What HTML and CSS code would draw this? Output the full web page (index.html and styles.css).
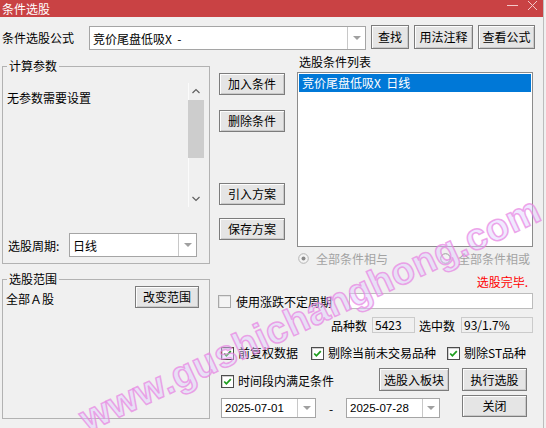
FILE: index.html
```html
<!DOCTYPE html>
<html lang="zh-CN">
<head>
<meta charset="utf-8">
<title>条件选股</title>
<link rel="stylesheet" href="styles.css">
</head>
<body>
<div class="win">
  <div class="titlebar">
    <span class="title">条件选股</span>
    <svg class="tb-icons" width="40" height="17" viewBox="0 0 40 17">
      <line x1="3" y1="5.5" x2="14" y2="5.5" stroke="#f3c9c9" stroke-width="1"/>
      <line x1="24" y1="1" x2="33" y2="10" stroke="#f3c9c9" stroke-width="1"/>
      <line x1="33" y1="1" x2="24" y2="10" stroke="#f3c9c9" stroke-width="1"/>
    </svg>
  </div>

  <div class="formula-row">
    <span class="formula-label">条件选股公式</span>
    <div class="combo formula-combo"><span class="combo-text">竞价尾盘低吸X  -</span><span class="combo-arrow"><i></i></span></div>
    <button class="btn btn-find">查找</button>
    <button class="btn btn-usage">用法注释</button>
    <button class="btn btn-view">查看公式</button>
  </div>

  <div class="main">
    <div class="left-col">
      <fieldset class="group g-params">
        <legend>计算参数</legend>
        <div class="params-body">
          <div class="params-text">无参数需要设置</div>
          <div class="vscroll">
            <svg class="sarrow" width="16" height="16" viewBox="0 0 16 16"><polyline points="4.5,10 8,6.5 11.5,10" fill="none" stroke="#606060" stroke-width="1.2"/></svg>
            <div class="strack"><div class="sthumb"></div></div>
            <svg class="sarrow" width="16" height="16" viewBox="0 0 16 16"><polyline points="4.5,6 8,9.5 11.5,6" fill="none" stroke="#606060" stroke-width="1.2"/></svg>
          </div>
        </div>
        <div class="period-row">
          <span class="period-label">选股周期:</span>
          <div class="combo period-combo"><span class="combo-text">日线</span><span class="combo-arrow"><i></i></span></div>
        </div>
      </fieldset>

      <fieldset class="group g-range">
        <legend>选股范围</legend>
        <div class="range-body">
          <span class="range-text">全部Ａ股</span>
          <button class="btn btn-range">改变范围</button>
        </div>
      </fieldset>
    </div>

    <div class="right-area">
      <div class="top-row">
        <div class="btn-col">
          <button class="btn btn-side b1">加入条件</button>
          <button class="btn btn-side b2">删除条件</button>
          <button class="btn btn-side b3">引入方案</button>
          <button class="btn btn-side b4">保存方案</button>
        </div>
        <div class="list-col">
          <div class="list-label">选股条件列表</div>
          <div class="listbox">
            <div class="list-item selected">竞价尾盘低吸X  日线</div>
          </div>
          <div class="radio-row">
            <span class="radio-item r1">
              <svg width="11" height="11" viewBox="0 0 11 11"><circle cx="5.5" cy="5.5" r="4.8" fill="#f4f4f4" stroke="#b4b4b4"/><circle cx="5.5" cy="5.5" r="2" fill="#8a8a8a"/></svg>
              <span>全部条件相与</span>
            </span>
            <span class="radio-item r2">
              <svg width="11" height="11" viewBox="0 0 11 11"><circle cx="5.5" cy="5.5" r="4.8" fill="#f4f4f4" stroke="#9a9a9a"/></svg>
              <span>全部条件相或</span>
            </span>
          </div>
        </div>
      </div>

      <div class="bottom">
        <div class="status">选股完毕.</div>
        <div class="row-unfix">
          <span class="cb unchecked"></span>
          <span class="cb-text">使用涨跌不定周期</span>
          <div class="edit unfix-edit"></div>
        </div>
        <div class="row-counts">
          <span>品种数</span>
          <div class="field f-count">5423</div>
          <span class="sel-label">选中数</span>
          <div class="field f-sel">93/1.7%</div>
        </div>
        <div class="row-opts">
          <span class="opt o1"><span class="cb checked"><svg width="13" height="13" viewBox="0 0 13 13"><polyline points="3.2,6.5 5.4,8.8 9.8,4.2" fill="none" stroke="#1e9e1e" stroke-width="1.8"/></svg></span>前复权数据</span>
          <span class="opt o2"><span class="cb checked"><svg width="13" height="13" viewBox="0 0 13 13"><polyline points="3.2,6.5 5.4,8.8 9.8,4.2" fill="none" stroke="#1e9e1e" stroke-width="1.8"/></svg></span>剔除当前未交易品种</span>
          <span class="opt o3"><span class="cb checked"><svg width="13" height="13" viewBox="0 0 13 13"><polyline points="3.2,6.5 5.4,8.8 9.8,4.2" fill="none" stroke="#1e9e1e" stroke-width="1.8"/></svg></span>剔除ST品种</span>
        </div>
        <div class="row-time">
          <span class="opt o-time"><span class="cb checked"><svg width="13" height="13" viewBox="0 0 13 13"><polyline points="3.2,6.5 5.4,8.8 9.8,4.2" fill="none" stroke="#1e9e1e" stroke-width="1.8"/></svg></span>时间段内满足条件</span>
          <button class="btn btn-block">选股入板块</button>
          <button class="btn btn-run">执行选股</button>
        </div>
        <div class="row-date">
          <div class="combo date-combo d1"><span class="combo-text date-text">2025-07-01</span><span class="combo-arrow"><i></i></span></div>
          <span class="dash">-</span>
          <div class="combo date-combo d2"><span class="combo-text date-text">2025-07-28</span><span class="combo-arrow"><i></i></span></div>
          <button class="btn btn-close">关闭</button>
        </div>
      </div>
    </div>
  </div>

  <div class="watermark">www.gushichanghong.com</div>
</div>
</body>
</html>
```

FILE: styles.css
```css
* { box-sizing: border-box; }
html, body { margin: 0; padding: 0; }
body {
  width: 546px;
  height: 428px;
  background: #f0f0f0;
  font-family: "Noto Sans CJK SC", "Liberation Sans", sans-serif;
  font-size: 12px;
  color: #000;
  overflow: hidden;
}
.win {
  position: relative;
  width: 544px;
  height: 428px;
  border-right: 1px solid #bdbdbd;
  overflow: hidden;
}

/* title bar */
.titlebar {
  height: 17px;
  background: #c94244;
  display: flex;
  align-items: center;
  justify-content: space-between;
}
.title {
  color: #fff;
  padding-left: 2px;
  line-height: 17px;
  font-size: 12px;
}
.tb-icons { margin-right: -1px; }

/* generic controls */
.btn {
  font-family: inherit;
  font-size: 12px;
  color: #000;
  background: #e5e5e5;
  border: 1px solid #7c7c7c;
  box-shadow: inset 1px 1px 0 #fdfdfd, inset -1px -1px 0 #c9c9c9;
  padding: 0;
  margin: 0;
  line-height: 1;
  display: flex;
  align-items: center;
  justify-content: center;
  flex: none;
}
.combo {
  display: flex;
  background: #fff;
  border: 1px solid #a5a5a5;
  flex: none;
}
.combo-text {
  flex: 1;
  white-space: pre;
  padding-left: 3px;
  display: flex;
  align-items: center;
  overflow: hidden;
}
.combo-arrow {
  width: 18px;
  border-left: 1px solid #c8c8c8;
  display: flex;
  align-items: center;
  justify-content: center;
}
.combo-arrow i {
  display: block;
  width: 0;
  height: 0;
  border-left: 4px solid transparent;
  border-right: 4px solid transparent;
  border-top: 4px solid #a0a0a0;
}

/* formula row */
.formula-row {
  display: flex;
  align-items: flex-start;
  height: 25px;
  margin-top: 8px;
  padding-left: 2px;
}
.formula-label {
  width: 87px;
  line-height: 25px;
}
.formula-combo {
  width: 277px;
  height: 24px;
  margin-top: 1px;
}
.btn-find { width: 38px; height: 24px; margin-left: 5px; }
.btn-usage { width: 59px; height: 24px; margin-left: 5px; }
.btn-view { width: 57px; height: 24px; margin-left: 5px; }

/* main area */
.main {
  display: flex;
  align-items: flex-start;
  padding-left: 2px;
}
.left-col {
  width: 208px;
  display: flex;
  flex-direction: column;
}
.group {
  margin: 0;
  padding: 0;
  border: 1px solid #b2b2b2;
  min-width: 0;
  width: 208px;
}
.group legend {
  padding: 0 2px;
  margin-left: 4px;
  line-height: 14px;
  font-size: 12px;
}
.g-params {
  margin-top: 9px;
  height: 205px;
}
.params-body {
  display: flex;
  height: 134px;
}
.params-text {
  flex: 1;
  margin-top: 17px;
  padding-left: 4px;
  line-height: 16px;
}
.vscroll {
  width: 16px;
  height: 124px;
  margin-top: 10px;
  margin-right: 5px;
  display: flex;
  flex-direction: column;
  border-left: 1px solid #fbfbfb;
}
.sarrow { flex: none; margin-left: -1px; }
.strack {
  flex: 1;
  padding-top: 1px;
}
.sthumb {
  height: 58px;
  background: #cdcdcd;
  margin-left: -1px;
}
.period-row {
  display: flex;
  align-items: center;
  margin-top: 26px;
  height: 24px;
  padding-left: 5px;
}
.period-label { width: 61px; }
.period-combo { width: 128px; height: 24px; }

.g-range {
  margin-top: 8px;
  height: 147px;
}
.range-body {
  display: flex;
  justify-content: space-between;
  align-items: flex-start;
  padding-left: 3px;
  padding-right: 10px;
}
.range-text {
  margin-top: 5px;
  line-height: 16px;
}
.btn-range { width: 64px; height: 22px; }

/* right area */
.right-area {
  margin-left: 8px;
  width: 316px;
}
.top-row {
  display: flex;
  align-items: flex-start;
}
.btn-col {
  margin-left: 1px;
  width: 66px;
  display: flex;
  flex-direction: column;
}
.btn-side { width: 66px; height: 22px; }
.b1 { margin-top: 23px; }
.b2 { margin-top: 15px; }
.b3 { margin-top: 51px; }
.b4 { margin-top: 13px; }

.list-col {
  margin-left: 12px;
  width: 236px;
}
.list-label {
  margin-top: 5px;
  line-height: 14px;
  padding-left: 2px;
}
.listbox {
  margin-top: 3px;
  height: 175px;
  background: #fff;
  border: 1px solid #8c8c8c;
  padding: 1px;
}
.list-item {
  height: 18px;
  line-height: 18px;
  padding-left: 3px;
  white-space: pre;
}
.list-item.selected {
  background: #0078d7;
  color: #fff;
}
.radio-row {
  margin-top: 4px;
  height: 14px;
  display: flex;
  align-items: center;
  color: #a3a3a3;
}
.radio-item {
  display: flex;
  align-items: center;
  gap: 7px;
}
.r1 { margin-left: 1px; width: 142px; }

/* bottom */
.status {
  margin-top: 10px;
  line-height: 14px;
  text-align: right;
  padding-right: 6px;
  color: #ff0000;
}
.cb {
  width: 13px;
  height: 13px;
  flex: none;
  display: block;
  background: #fff;
  border: 1px solid #4c4c4c;
  box-shadow: inset 1px 1px 0 #cfcfcf;
  position: relative;
}
.cb svg { display: block; margin: -1px 0 0 -1px; }
.cb.unchecked {
  background: #f4f4f4;
  border: 1px solid #a8a8a8;
  box-shadow: inset 1px 1px 0 #e2e2e2;
}
.row-unfix {
  margin-top: 4px;
  height: 16px;
  display: flex;
  align-items: center;
}
.cb-text { margin-left: 5px; }
.edit {
  background: #fff;
  border: 1px solid #bcbcbc;
}
.unfix-edit {
  margin-left: auto;
  margin-right: 1px;
  width: 184px;
  height: 16px;
}
.row-counts {
  margin-top: 8px;
  height: 16px;
  display: flex;
  align-items: center;
  justify-content: flex-end;
  padding-right: 1px;
}
.field {
  height: 16px;
  background: #f0f0f0;
  border: 1px solid #cbcbcb;
  line-height: 14px;
  padding-left: 2px;
}
.f-count { width: 43px; margin-left: 5px; }
.sel-label { margin-left: 4px; }
.f-sel { width: 72px; margin-left: 6px; }

.row-opts {
  margin-top: 13px;
  height: 14px;
  display: flex;
  align-items: center;
  padding-left: 3px;
}
.opt {
  display: flex;
  align-items: center;
  gap: 4px;
  line-height: 14px;
  white-space: nowrap;
}
.o1 { width: 90px; }
.o2 { width: 136px; }

.row-time {
  margin-top: 8px;
  height: 23px;
  display: flex;
  align-items: flex-start;
  padding-left: 3px;
}
.o-time { margin-top: 6px; height: 14px; }
.btn-block { width: 70px; height: 23px; margin-left: auto; }
.btn-run { width: 65px; height: 23px; margin-left: 13px; margin-right: 7px; }

.row-date {
  margin-top: 4px;
  height: 22px;
  display: flex;
  align-items: flex-start;
  padding-left: 3px;
}
.date-combo { height: 20px; margin-top: 3px; }
.d1 { width: 95px; }
.d2 { width: 94px; }
.date-text {
  font-family: "Liberation Sans", sans-serif;
  font-size: 11.5px;
  padding-left: 3px;
}
.d2 .combo-arrow { width: 17px; }
.dash {
  width: 30px;
  text-align: center;
  padding-top: 7px;
  line-height: 14px;
}
.btn-close { width: 65px; height: 22px; margin-left: auto; margin-right: 7px; }

/* watermark overlay */
.watermark {
  position: absolute;
  left: 58px;
  top: 290px;
  width: 504px;
  height: 48px;
  line-height: 48px;
  text-align: center;
  transform: rotate(-25deg);
  transform-origin: 252px 24px;
  font-family: "Liberation Sans", sans-serif;
  font-size: 38px;
  font-weight: bold;
  letter-spacing: 0.5px;
  color: rgba(222, 205, 255, 0.45);
  -webkit-text-stroke: 1.5px rgba(232, 130, 225, 0.7);
  pointer-events: none;
  white-space: nowrap;
}
```
